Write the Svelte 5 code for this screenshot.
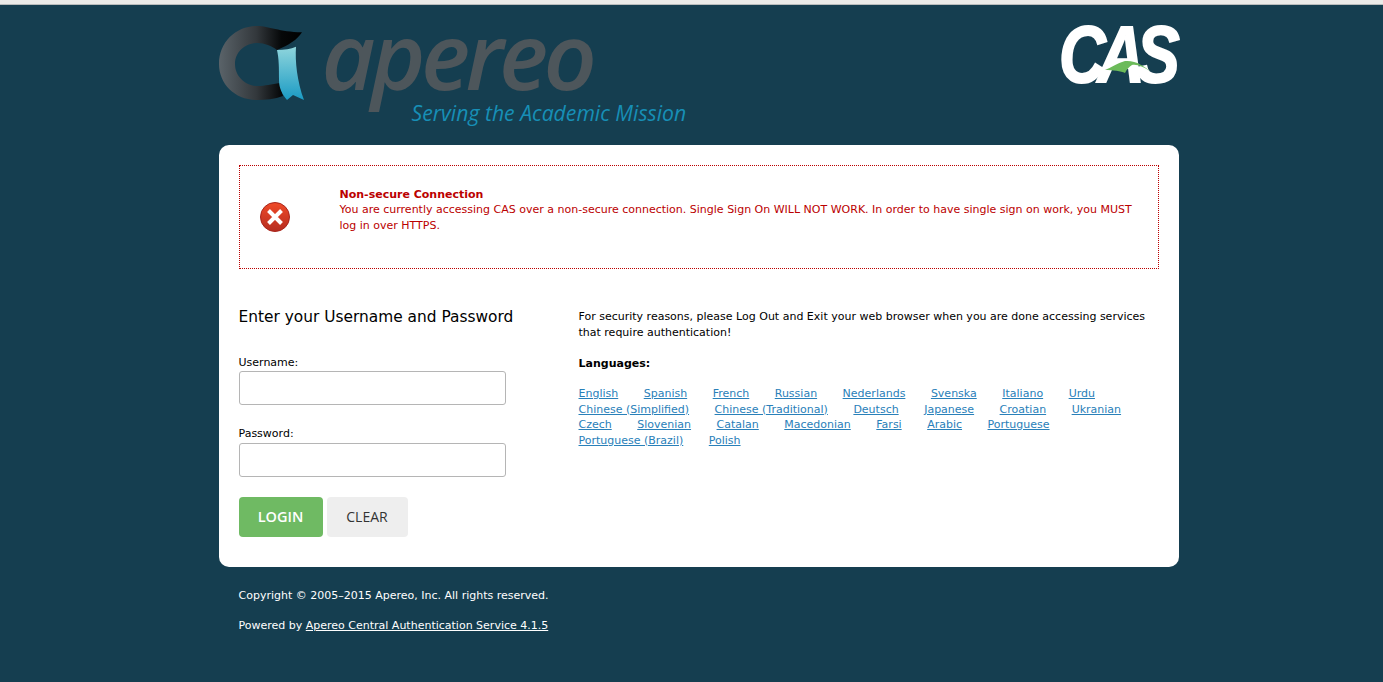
<script lang="ts">
  const languages = [
    "English", "Spanish", "French", "Russian", "Nederlands", "Svenska", "Italiano", "Urdu",
    "Chinese (Simplified)", "Chinese (Traditional)", "Deutsch", "Japanese", "Croatian", "Ukranian",
    "Czech", "Slovenian", "Catalan", "Macedonian", "Farsi", "Arabic", "Portuguese",
    "Portuguese (Brazil)", "Polish"
  ];
</script>

<div class="strip"></div>
<div class="page">
  <header>
    <div class="apereo">
      <svg class="mark" width="90" height="76" viewBox="0 0 90 76" aria-hidden="true">
        <defs>
          <linearGradient id="ring" x1="0" x2="1" y1="0" y2="0">
            <stop offset="0" stop-color="#5a6369" />
            <stop offset="0.45" stop-color="#33383c" />
            <stop offset="0.75" stop-color="#060809" />
            <stop offset="1" stop-color="#000" />
          </linearGradient>
          <linearGradient id="ribbon" x1="0" x2="0" y1="0" y2="1">
            <stop offset="0" stop-color="#8fd5dc" />
            <stop offset="1" stop-color="#1a9bc4" />
          </linearGradient>
        </defs>
        <path d="M83 6.300C78 14 70 19 58 24C53 20 45 17 39 17C26 17 16 26 16 38C16 50 26 60 39 60C46 60 52 58 61 57L64 70C56 73 46 74 38 74C16 74 0 58 0 38C0 16 17 0 38 0C50 0 60 6 83 6.300Z" fill="url(#ring)" />
        <path d="M58 24C65 24 72 23 77 20.700C76 35 78 55 85 74L74 69L68 74C63 68 60 62 60 54C60 42 60 33 58 24Z" fill="url(#ribbon)" />
      </svg>
      <div class="wordmark">apereo</div>
      <div class="tagline">Serving the Academic Mission</div>
    </div>
    <div class="cas">
      <span>CAS</span>
      <svg class="swoosh" width="47" height="13" viewBox="0 0 47 13" aria-hidden="true">
        <path d="M0 10C6 8 12 3 20 1C30 0 40 6 47 13C40 7 32 4 27 5C24 7 22 9 20 13C16 11 8 10 0 10Z" fill="#6cbb5a" />
      </svg>
    </div>
  </header>

  <main class="card">
    <div class="error">
      <div class="icon">
        <svg width="30" height="30" viewBox="0 0 30 30" aria-hidden="true">
          <defs>
            <linearGradient id="red" x1="0" x2="0" y1="0" y2="1">
              <stop offset="0" stop-color="#f04a28" />
              <stop offset="1" stop-color="#b52c1f" />
            </linearGradient>
          </defs>
          <circle cx="15" cy="15" r="14.500" fill="url(#red)" stroke="#a8261c" stroke-width="1" />
          <path d="M8.500 8.500L21.500 21.500M21.500 8.500L8.500 21.500" stroke="#fff" stroke-width="4" />
        </svg>
      </div>
      <div class="message">
        <strong>Non-secure Connection</strong>
        <p>You are currently accessing CAS over a non-secure connection. Single Sign On WILL NOT WORK. In order to have single sign on work, you MUST log in over HTTPS.</p>
      </div>
    </div>

    <div class="columns">
      <form class="login" onsubmit={(e) => e.preventDefault()}>
        <h2>Enter your Username and Password</h2>
        <label for="username">Username:</label>
        <input id="username" type="text" />
        <label for="password">Password:</label>
        <input id="password" type="password" />
        <div class="buttons">
          <button class="submit" type="submit">LOGIN</button>
          <button class="reset" type="reset">CLEAR</button>
        </div>
      </form>

      <aside>
        <p class="notice">For security reasons, please Log Out and Exit your web browser when you are done accessing services that require authentication!</p>
        <h3>Languages:</h3>
        <div class="languages">
          {#each languages as language}
            <a href="#top">{language}</a>
          {/each}
        </div>
      </aside>
    </div>
  </main>

  <footer>
    <p>Copyright © 2005–2015 Apereo, Inc. All rights reserved.</p>
    <p>Powered by <a href="#top">Apereo Central Authentication Service 4.1.5</a></p>
  </footer>
</div>

<style>
  :global(body) {
    background: #153e50;
    font-family: "DejaVu Sans", sans-serif;
    font-size: 11px;
    overflow: hidden;
  }

  .strip {
    height: 4px;
    background: #ebebe9;
    border-bottom: 1px solid #b9bcbc;
  }

  .page {
    width: 960px;
    margin: 0 auto;
    position: relative;
    left: 7px;
  }

  header {
    height: 140px;
    display: flex;
    justify-content: space-between;
  }

  .apereo {
    position: relative;
    width: 480px;
  }

  .mark {
    position: absolute;
    left: 0;
    top: 21px;
  }

  .wordmark {
    position: absolute;
    left: 103px;
    top: 5px;
    font-family: "Open Sans", sans-serif;
    font-style: italic;
    font-weight: 600;
    font-size: 93px;
    line-height: 88px;
    letter-spacing: -4.500px;
    color: #4d565b;
  }

  .tagline {
    position: absolute;
    left: 193px;
    top: 94px;
    font-family: "Open Sans", sans-serif;
    font-style: italic;
    font-size: 21.200px;
    line-height: 28px;
    white-space: nowrap;
    color: #178fb6;
  }

  .cas {
    position: relative;
    width: 120px;
    height: 90px;
    color: #fff;
    margin-top: 15px;
  }

  .cas span {
    display: block;
    width: 200px;
    font-family: "Liberation Sans", sans-serif;
    font-style: italic;
    font-weight: 700;
    font-size: 80px;
    line-height: 70px;
    letter-spacing: -10px;
    -webkit-text-stroke: 2px #fff;
    white-space: nowrap;
    transform: scaleX(0.81);
    transform-origin: left center;
  }

  .swoosh {
    position: absolute;
    left: 46px;
    top: 40px;
  }

  .card {
    box-sizing: border-box;
    height: 422px;
    background: #fff;
    border-radius: 10px;
    padding: 20px;
  }

  .error {
    box-sizing: border-box;
    height: 104px;
    border: 1px dotted #b00;
    display: flex;
    align-items: flex-start;
    color: #b00;
  }

  .icon {
    width: 100px;
    padding: 36px 0 0 20px;
    box-sizing: border-box;
    display: flex;
  }

  .message {
    flex: 1;
    padding: 20.600px 20px 0 0;
    line-height: 15.500px;
  }

  .message p {
    margin: 0;
  }

  .columns {
    display: flex;
    margin-top: 37px;
  }

  .login {
    width: 340px;
    flex: none;
  }

  h2 {
    font-size: 15.400px;
    font-weight: 400;
    line-height: 22px;
    margin: 0 0 27px;
    color: #000;
    white-space: nowrap;
  }

  label {
    display: block;
    line-height: 15px;
    margin-bottom: 1px;
    color: #000;
  }

  input {
    box-sizing: border-box;
    display: block;
    width: 267px;
    height: 34px;
    border: 1px solid #b5b5b5;
    border-radius: 3px;
    margin: 0 0 21px;
    padding: 0 8px;
    background: #fff;
  }

  #password {
    margin: 2px 0 20px;
  }

  .buttons {
    display: flex;
    gap: 4px;
  }

  button {
    height: 40px;
    border: 0;
    border-radius: 4px;
    padding: 0 0 2px;
    font-family: "Open Sans", sans-serif;
    font-size: 14px;
  }

  .submit {
    width: 84px;
    background: #6fba63;
    color: #fff;
    font-weight: 600;
    font-size: 14.500px;
  }

  .reset {
    width: 81px;
    background: #eee;
    color: #333;
  }

  aside {
    flex: 1;
    color: #000;
    line-height: 16px;
    margin-top: 3px;
  }

  .notice {
    margin: 0 0 15px;
  }

  h3 {
    font-size: 11px;
    font-weight: 700;
    line-height: 16px;
    margin: 0 0 14px;
  }

  .languages {
    line-height: 15.500px;
    display: flex;
    flex-wrap: wrap;
    column-gap: 25.500px;
    width: 560px;
  }

  .languages a {
    color: #2980b9;
    text-decoration: underline;
  }

  footer {
    color: #fff;
    padding: 21px 20px 0;
    line-height: 16px;
  }

  footer p {
    margin: 0 0 14px;
  }

  footer a {
    color: #fff;
  }
</style>
